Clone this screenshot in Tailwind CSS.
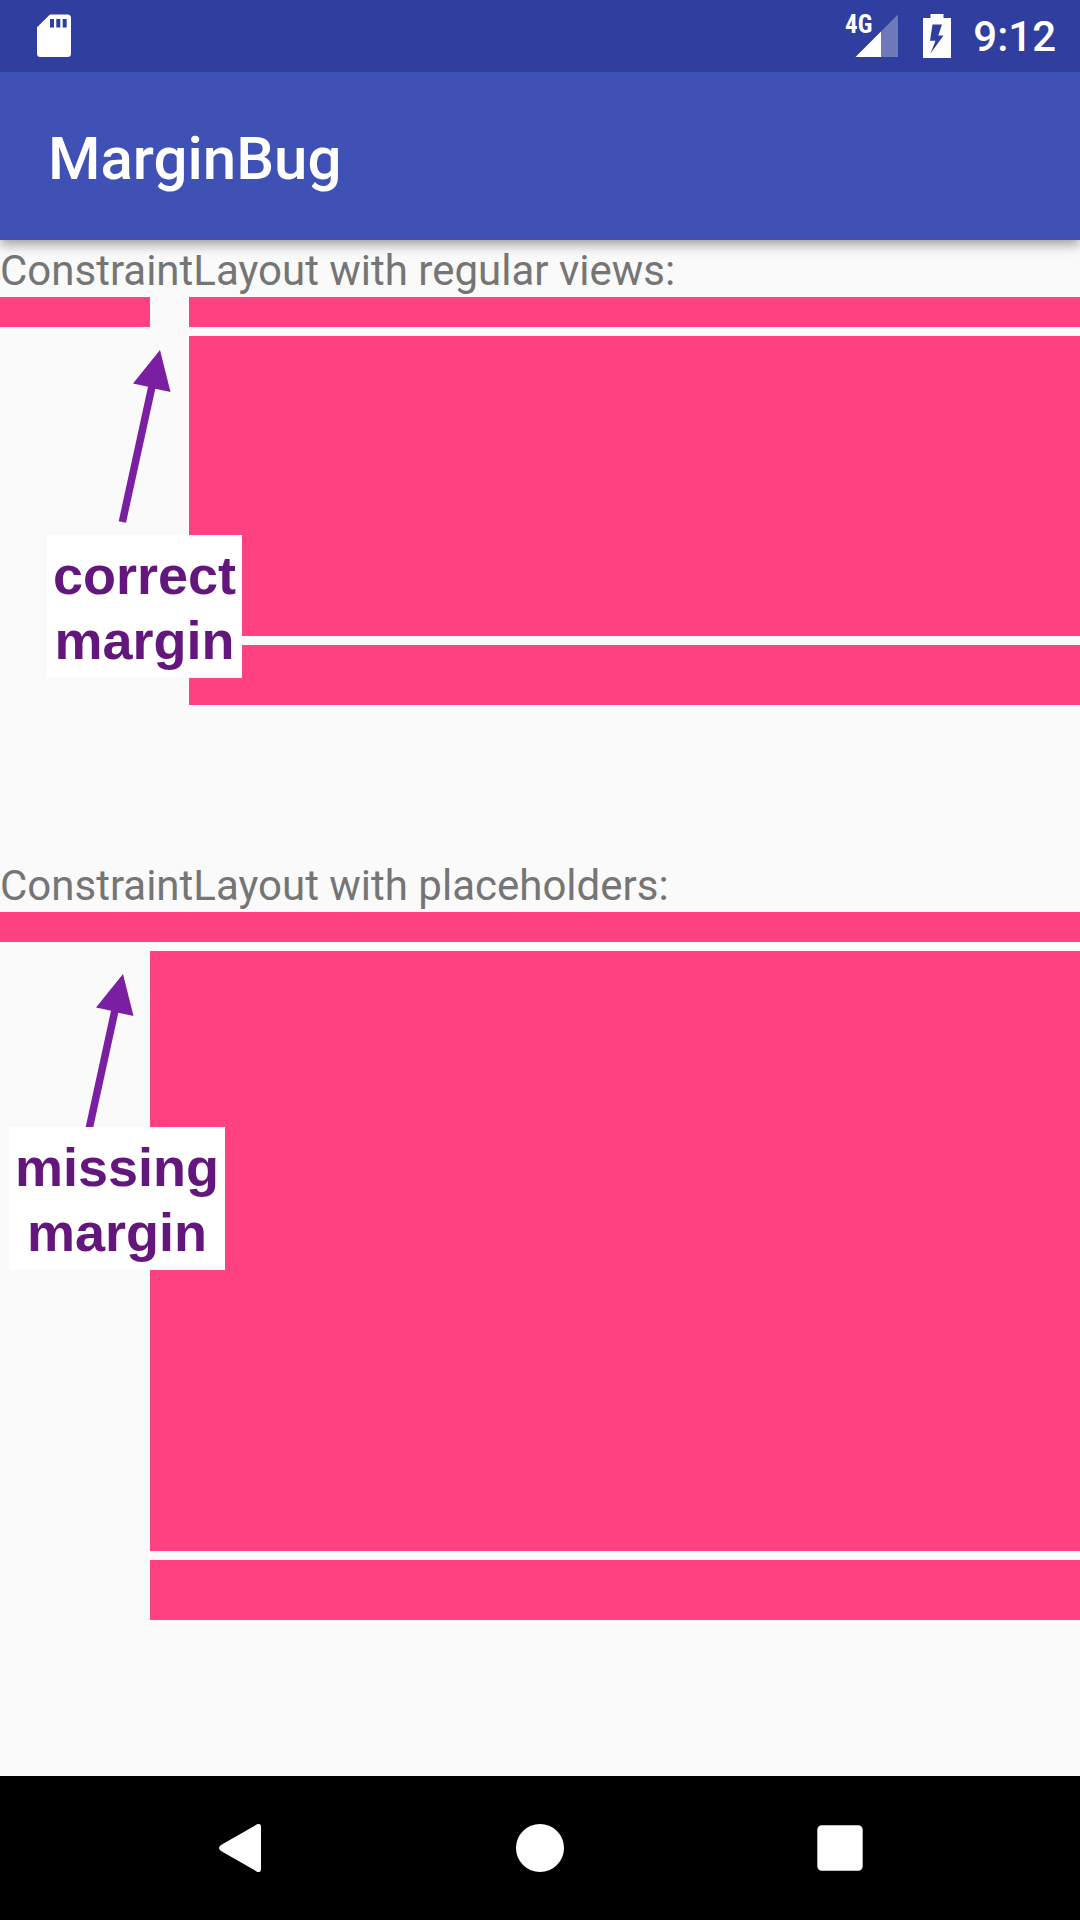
<!DOCTYPE html>
<html lang="en">
<head>
<meta charset="utf-8">
<meta name="viewport" content="width=device-width, initial-scale=1">
<title>MarginBug</title>
<script src="https://cdn.jsdelivr.net/npm/@tailwindcss/browser@4"></script>
</head>
<body class="min-h-screen flex flex-col bg-[#fafafa] font-['Roboto',sans-serif]">
  <!-- Status bar -->
  <div class="relative z-10 h-[72px] shrink-0 flex items-center justify-between bg-[#303f9f] pl-9 pr-6 text-white">
    <svg class="w-9 h-[72px]" viewBox="36 0 36 72" fill="currentColor" role="img" aria-label="SD card">
      <path fill-rule="evenodd" d="M50 14.5H67.500Q71 14.500 71 18V53.500Q71 57 67.500 57H40.500Q37 57 37 53.500V27.300ZM50 19V27.500H54V19ZM56.300 19V27.500H60.300V19ZM62.700 19V27.500H66.700V19Z"/>
    </svg>
    <div class="flex items-center">
      <svg class="w-[56px] h-[72px]" viewBox="844 0 56 72" fill="currentColor" role="img" aria-label="4G signal">
        <text x="845" y="33" class="font-['Liberation_Sans_Narrow','Roboto_Condensed','Roboto',sans-serif] font-bold text-[25px]">4G</text>
        <path d="M898 14.500V57H881V31.500Z" fill-opacity=".3"/>
        <path d="M855.500 57L881 31.500V57Z"/>
      </svg>
      <svg class="w-[73px] h-[72px]" viewBox="900 0 73 72" fill="currentColor" role="img" aria-label="Battery charging">
        <path fill-rule="evenodd" d="M930.500 14H943.500V18H951V58H923V18H930.500ZM932.500 24.500L930 40.700H935.500L930.500 53.500L943.500 35.500H938.300L942 24.500Z"/>
      </svg>
      <span class="font-medium text-[42px] leading-[72px] pt-[2px]">9:12</span>
    </div>
  </div>

  <!-- App bar -->
  <header class="relative h-[168px] shrink-0 flex items-center bg-[#3f51b5] px-12 pt-[6px] shadow-[0_4px_12px_rgba(0,0,0,0.4)]">
    <h1 class="text-white font-medium text-[60px] leading-[72px]">MarginBug</h1>
  </header>

  <main class="flex-1">
    <section class="relative h-[615px]">
      <h2 class="pt-1 text-[42px] leading-[53px] text-[#757575] whitespace-nowrap">ConstraintLayout with regular views:</h2>
      <div class="grid grid-cols-[150px_1fr] gap-x-[39px] gap-y-[9px]">
        <div class="h-[30px] bg-[#ff4081]"></div>
        <div class="h-[30px] bg-[#ff4081]"></div>
        <div class="col-start-2 h-[300px] bg-[#ff4081]"></div>
        <div class="col-start-2 h-[60px] bg-[#ff4081]"></div>
      </div>
      <svg class="absolute left-[120px] top-[110px] w-[52px] h-[174px] overflow-visible" viewBox="0 0 52 174" fill="#7b1fa2" aria-hidden="true">
        <path d="M40 0L50.500 42L35.300 38.700L6 172.800L-1.300 171.200L28 36.800L13 33.500Z"/>
      </svg>
      <p class="absolute left-[47px] top-[295px] bg-white px-[6px] pt-2 pb-[5px] text-center font-['Liberation_Sans',sans-serif] font-bold text-[54px] leading-[65px] text-[#63177d]">correct<br>margin</p>
    </section>

    <section class="relative">
      <h2 class="pt-1 text-[42px] leading-[53px] text-[#757575] whitespace-nowrap">ConstraintLayout with placeholders:</h2>
      <div class="grid grid-cols-[150px_1fr] gap-y-[9px]">
        <div class="h-[30px] bg-[#ff4081]"></div>
        <div class="h-[30px] bg-[#ff4081]"></div>
        <div class="col-start-2 h-[600px] bg-[#ff4081]"></div>
        <div class="col-start-2 h-[60px] bg-[#ff4081]"></div>
      </div>
      <svg class="absolute left-[83px] top-[119px] w-[52px] h-[174px] overflow-visible" viewBox="0 0 52 174" fill="#7b1fa2" aria-hidden="true">
        <path d="M40 0L50.500 42L35.300 38.700L6 172.800L-1.300 171.200L28 36.800L13 33.500Z"/>
      </svg>
      <p class="absolute left-[9px] top-[272px] bg-white px-[6px] pt-2 pb-[5px] text-center font-['Liberation_Sans',sans-serif] font-bold text-[54px] leading-[65px] text-[#63177d]">missing<br>margin</p>
    </section>
  </main>

  <!-- Navigation bar -->
  <nav class="h-36 shrink-0 grid grid-cols-3 bg-black px-[90px] text-white">
    <button type="button" aria-label="Back" class="flex items-center justify-center">
      <svg class="size-12" viewBox="0 0 48 48" fill="currentColor"><path d="M40.500 .6Q45 -1.500 45 3V45Q45 49.500 40.500 47.400L5 27Q1 24 5 21Z"/></svg>
    </button>
    <button type="button" aria-label="Home" class="flex items-center justify-center">
      <svg class="size-12" viewBox="0 0 48 48" fill="currentColor"><circle cx="24" cy="24" r="24"/></svg>
    </button>
    <button type="button" aria-label="Overview" class="flex items-center justify-center">
      <svg class="size-12" viewBox="0 0 48 48" fill="currentColor"><rect x="1.300" y="1.300" width="45.400" height="45.400" rx="4.500"/></svg>
    </button>
  </nav>
</body>
</html>
